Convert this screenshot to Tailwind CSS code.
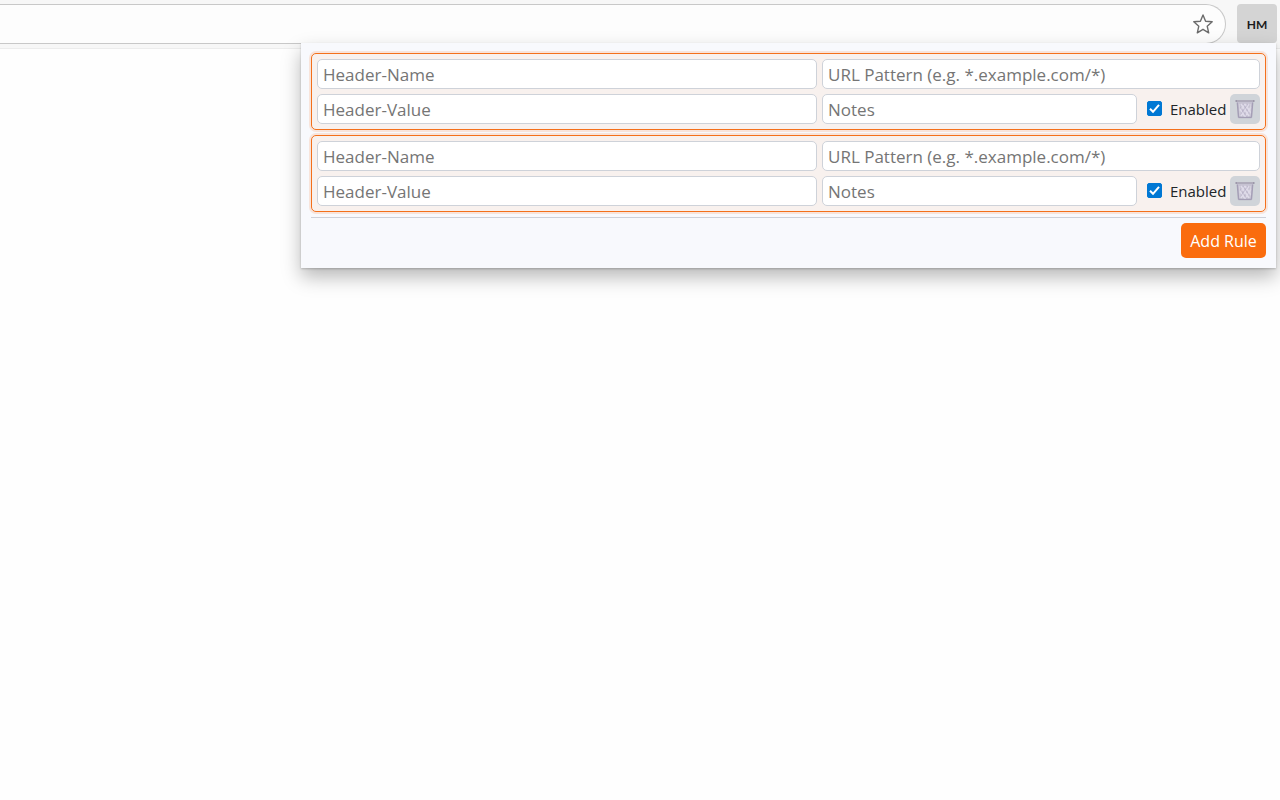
<!DOCTYPE html>
<html lang="en">
<head>
    <meta charset="UTF-8">
    <meta name="viewport" content="width=device-width, initial-scale=1.0">
    <title>Header Modifier</title>
    <script src="https://cdn.jsdelivr.net/npm/@tailwindcss/browser@4"></script>
</head>
<body class="relative min-h-screen overflow-x-hidden bg-[#fefefe] font-['Open_Sans',sans-serif] text-[#212529]">
    <!-- Browser toolbar -->
    <header class="flex h-[49px] items-start gap-[11px] border-b border-[#ececec] bg-[#f7f7f7] pt-1 pr-[3px]">
        <div class="flex h-10 flex-1 items-center rounded-r-full border border-l-0 border-[#c8c8c8] bg-[#fdfdfd] pr-3">
            <input type="text" aria-label="Address" class="h-full min-w-0 flex-1 bg-transparent px-4 outline-none">
            <button type="button" aria-label="Bookmark this page">
                <svg class="size-5" viewBox="0 0 20 20" fill="none" stroke="#6b6b6b" stroke-width="1.4" stroke-linejoin="round">
                    <path d="M10 1l2.600 6.200 6.600.6-5 4.400 1.500 6.600-5.700-3.500-5.700 3.500 1.500-6.600-5-4.400 6.600-.6z"/>
                </svg>
            </button>
        </div>
        <button type="button" class="h-[39px] w-10 rounded bg-[#d4d4d4] pt-[2px] font-[Lato,sans-serif] text-xs font-bold text-[#1b1b1b]">HM</button>
    </header>

    <!-- Extension popup -->
    <main class="absolute top-[43px] right-1 left-[301px] bg-[#f8f9fd] p-[10px] shadow-[0_1px_2px_rgba(0,0,0,0.2),0_9px_18px_rgba(0,0,0,0.28)]">
        <div id="rules" class="flex flex-col gap-[5px]"></div>
        <hr class="my-[5px] border-[#ced0d8]">
        <div class="flex justify-end">
            <button type="button" id="add-rule" class="h-[35px] w-[85px] rounded-[5px] bg-[#fa6c0e] pt-px text-base text-white">Add Rule</button>
        </div>
    </main>

    <template id="rule-template">
        <form class="grid grid-cols-[minmax(0,500fr)_minmax(0,438fr)] gap-[5px] rounded-[5px] border border-[#f4701b] bg-[#f8f1ee] p-[5px] shadow-[0_0_0_2px_rgba(250,108,14,0.14)]">
            <input type="text" aria-label="Header name" placeholder="Header-Name" class="h-[30px] min-w-0 rounded-[5px] border border-[#ced2d9] bg-white px-[5px] pt-px text-[17px] placeholder:text-[#757575]">
            <input type="text" aria-label="URL pattern" placeholder="URL Pattern (e.g. *.example.com/*)" class="h-[30px] min-w-0 rounded-[5px] border border-[#ced2d9] bg-white px-[5px] pt-px text-[17px] placeholder:text-[#757575]">
            <input type="text" aria-label="Header value" placeholder="Header-Value" class="h-[30px] min-w-0 rounded-[5px] border border-[#ced2d9] bg-white px-[5px] pt-px text-[17px] placeholder:text-[#757575]">
            <div class="flex items-center gap-[5px]">
                <input type="text" aria-label="Notes" placeholder="Notes" class="h-[30px] min-w-0 flex-1 rounded-[5px] border border-[#ced2d9] bg-white px-[5px] pt-px text-[17px] placeholder:text-[#757575]">
                <label class="flex w-[83px] items-center gap-2 pl-[5px] text-[15px]">
                    <span class="relative -mt-[2px] size-[15px] shrink-0">
                        <input type="checkbox" checked class="peer block size-[15px] appearance-none rounded-xs border border-[#767676] bg-white checked:border-[#0078d4] checked:bg-[#0078d4]">
                        <svg class="pointer-events-none absolute inset-0 hidden size-[15px] peer-checked:block" viewBox="0 0 15 15" fill="none" stroke="#fff" stroke-width="2">
                            <path d="M3 7.800l3 3 6-7"/>
                        </svg>
                    </span>
                    Enabled
                </label>
                <button type="button" aria-label="Delete rule" class="delete-rule flex size-[30px] shrink-0 items-center justify-center rounded-[5px] bg-[#d0d4d9]">
                    <svg class="size-5" viewBox="0 0 20 20" fill="none">
                        <path d="M2 2h16l-1 17H3z" fill="#c6c2d2"/>
                        <path d="M6 5l8 12M10 5l6 9M5 10l5 8M14 5L6 17M10 5l-5 7M16 8l-6 10" stroke="#dfdbe9" stroke-width="1.500"/>
                        <path d="M8 5l8 12M5 8l7 10M13 5L5 16" stroke="#b3adc5" stroke-width=".6"/>
                        <path d="M2.300 3.500L3.600 18.500M17.700 3.500l-1.300 15" stroke="#a49eb5" stroke-width="1.400"/>
                        <path d="M4.300 5l.8 12M15.700 5l-.8 12" stroke="#d9d6e1" stroke-width=".8"/>
                        <path d="M.5 2h19" stroke="#9c97a9" stroke-width="2"/>
                        <path d="M2 2h16" stroke="#cecbd7" stroke-width=".8"/>
                        <path d="M3.500 18.500h13" stroke="#a49eb5" stroke-width="1.300"/>
                    </svg>
                </button>
            </div>
        </form>
    </template>

<script>
const rules = document.getElementById('rules');
const template = document.getElementById('rule-template');

function addRule() {
    const rule = template.content.firstElementChild.cloneNode(true);
    rule.querySelector('.delete-rule').addEventListener('click', () => rule.remove());
    rules.appendChild(rule);
}

document.getElementById('add-rule').addEventListener('click', addRule);

addRule();
addRule();
</script>
</body>
</html>
